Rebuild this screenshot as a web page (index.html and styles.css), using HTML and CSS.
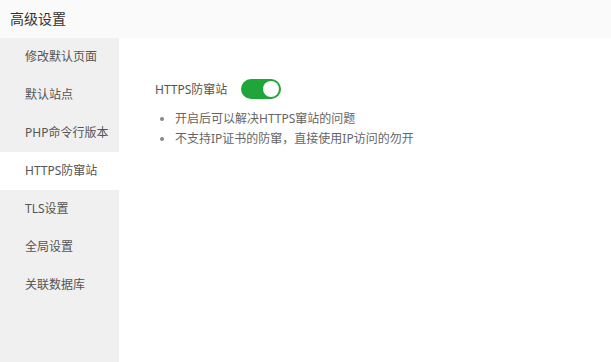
FILE: index.html
```html
<!DOCTYPE html>
<html lang="zh-CN">
<head>
<meta charset="utf-8">
<title>高级设置</title>
<link rel="stylesheet" href="styles.css">
</head>
<body>
<div class="page">
  <div class="header">高级设置</div>
  <div class="main">
    <ul class="nav">
      <li class="nav-item">修改默认页面</li>
      <li class="nav-item">默认站点</li>
      <li class="nav-item">PHP命令行版本</li>
      <li class="nav-item active">HTTPS防窜站</li>
      <li class="nav-item">TLS设置</li>
      <li class="nav-item">全局设置</li>
      <li class="nav-item">关联数据库</li>
    </ul>
    <div class="content">
      <div class="row">
        <span class="label">HTTPS防窜站</span>
        <span class="switch on"><span class="knob"></span></span>
      </div>
      <ul class="tips">
        <li>开启后可以解决HTTPS窜站的问题</li>
        <li>不支持IP证书的防窜，直接使用IP访问的勿开</li>
      </ul>
    </div>
  </div>
</div>
</body>
</html>
```
FILE: styles.css
```css
* { box-sizing: border-box; }
html, body { margin: 0; padding: 0; height: 100%; }
body {
  font-family: "Noto Sans", "Noto Sans CJK SC", sans-serif;
  background: #fff;
  color: #555;
}
.page { display: flex; flex-direction: column; height: 362px; }
.header {
  height: 38px;
  line-height: 38px;
  background: #fafafa;
  padding-left: 10px;
  font-size: 14px;
  color: #333;
}
.main { display: flex; flex: 1; }
.nav {
  list-style: none;
  margin: 0;
  padding: 0;
  width: 119px;
  background: #f0f0f0;
}
.nav-item {
  height: 38px;
  line-height: 38px;
  padding-left: 25px;
  font-size: 12px;
  color: #555;
}
.nav-item.active { background: #fff; }
.content { flex: 1; padding: 41px 0 0 36px; }
.row { display: flex; align-items: center; height: 20px; }
.label { font-size: 12px; color: #555; margin-right: 14px; }
.switch {
  width: 40px;
  height: 20px;
  border-radius: 10px;
  background: #ccc;
  position: relative;
  display: inline-block;
}
.switch.on { background: #20a53a; }
.knob {
  position: absolute;
  top: 2px;
  right: 2px;
  width: 16px;
  height: 16px;
  border-radius: 50%;
  background: #fff;
}
.tips {
  list-style: none;
  margin: 10px 0 0 0;
  padding: 0;
}
.tips li {
  position: relative;
  height: 20px;
  line-height: 20px;
  padding-left: 20px;
  font-size: 12px;
  color: #666;
}
.tips li::before {
  content: "";
  position: absolute;
  left: 5px;
  top: 8px;
  width: 4px;
  height: 4px;
  border-radius: 50%;
  background: #888;
}
```
